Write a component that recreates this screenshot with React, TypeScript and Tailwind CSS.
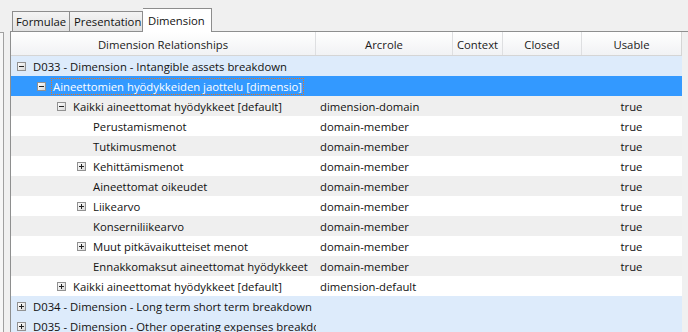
type Row = {
  level: number;
  exp?: "minus" | "plus";
  label: string;
  arcrole?: string;
  usable?: string;
  tone: "blue" | "sel" | "gray" | "white";
};

const rows: Row[] = [
  { level: 0, exp: "minus", label: "D033 - Dimension - Intangible assets breakdown", tone: "blue" },
  { level: 1, exp: "minus", label: "Aineettomien hyödykkeiden jaottelu [dimensio]", tone: "sel" },
  { level: 2, exp: "minus", label: "Kaikki aineettomat hyödykkeet [default]", arcrole: "dimension-domain", usable: "true", tone: "gray" },
  { level: 3, label: "Perustamismenot", arcrole: "domain-member", usable: "true", tone: "white" },
  { level: 3, label: "Tutkimusmenot", arcrole: "domain-member", usable: "true", tone: "gray" },
  { level: 3, exp: "plus", label: "Kehittämismenot", arcrole: "domain-member", usable: "true", tone: "white" },
  { level: 3, label: "Aineettomat oikeudet", arcrole: "domain-member", usable: "true", tone: "gray" },
  { level: 3, exp: "plus", label: "Liikearvo", arcrole: "domain-member", usable: "true", tone: "white" },
  { level: 3, label: "Konserniliikearvo", arcrole: "domain-member", usable: "true", tone: "gray" },
  { level: 3, exp: "plus", label: "Muut pitkävaikutteiset menot", arcrole: "domain-member", usable: "true", tone: "white" },
  { level: 3, label: "Ennakkomaksut aineettomat hyödykkeet", arcrole: "domain-member", usable: "true", tone: "gray" },
  { level: 2, exp: "plus", label: "Kaikki aineettomat hyödykkeet [default]", arcrole: "dimension-default", tone: "white" },
  { level: 0, exp: "plus", label: "D034 - Dimension - Long term short term breakdown", tone: "blue" },
  { level: 0, exp: "plus", label: "D035 - Dimension - Other operating expenses breakdown", tone: "blue" },
];

const toneClass = {
  blue: "bg-[#ddebfb] text-[#111]",
  sel: "bg-[#3399ff] text-white",
  gray: "bg-[#efefef] text-[#111]",
  white: "bg-white text-[#111]",
};

// indent per tree level, in px (box sits 6px in, text 22px in)
const indent = ["pl-[6px]", "pl-[26px]", "pl-[46px]", "pl-[66px]"];

function Expander({ kind }: { kind?: "minus" | "plus" }) {
  if (!kind) return <span className="w-[9px] shrink-0" />;
  return (
    <svg width={9} height={9} viewBox="0 0 9 9" className="shrink-0">
      <defs>
        <linearGradient id="exg" x1="0" y1="0" x2="1" y2="1">
          <stop offset="0" stopColor="#ffffff" />
          <stop offset="1" stopColor="#d6d6d6" />
        </linearGradient>
      </defs>
      <rect x={0.5} y={0.5} width={8} height={8} fill="url(#exg)" stroke="#919191" />
      <rect x={2} y={4} width={5} height={1} fill="#222" />
      {kind === "plus" && <rect x={4} y={2} width={1} height={5} fill="#222" />}
    </svg>
  );
}

const cols = "grid grid-cols-[305px_137px_50px_79px_99px]";

export default function App() {
  return (
    <div className="h-[332px] w-[688px] overflow-hidden bg-[#f0f0f0] font-['Open_Sans','Noto_Sans',sans-serif] text-[11.3px] leading-none">
      {/* tabs */}
      <div className="flex h-[31px] items-end pl-[12px]">
        <div className="flex h-[20px] w-[58px] items-center border border-b-0 border-[#8d8d8d] bg-gradient-to-b from-[#f4f4f4] to-[#e2e2e2] pl-[3px] pt-px text-[#111]">
          Formulae
        </div>
        <div className="flex h-[20px] w-[73px] items-center border border-b-0 border-l-0 border-[#8d8d8d] bg-gradient-to-b from-[#f4f4f4] to-[#e2e2e2] pl-[4px] pt-px text-[#111]">
          Presentation
        </div>
        <div className="relative z-10 -mb-px flex h-[24px] w-[69px] items-start border border-b-0 border-l-0 border-[#8d8d8d] bg-white pl-[5px] pt-[6px] text-[#111]">
          Dimension
        </div>
      </div>

      <div className="flex">
        {/* left splitter edge */}
        <div className="mt-px h-[300px] w-[4px] border-t border-r border-[#a0a0a0] bg-[#f6f6f6]" />
        <div className="ml-[6px] flex-1 border-t border-l border-[#8e8f8f]">
          <div className="w-[671px]">
            {/* header */}
            <div className={`${cols} h-[24px] border-r border-b border-[#d5d5d5] bg-gradient-to-b from-white to-[#f1f2f4] text-[#1a1a1a]`}>
              {["Dimension Relationships", "Arcrole", "Context", "Closed", "Usable"].map((h, i) => (
                <div
                  key={h}
                  className={`flex items-center justify-center pt-[2px] ${i < 4 ? "border-r border-[#dedfe1]" : ""}`}
                >
                  {h}
                </div>
              ))}
            </div>

            {/* rows */}
            {rows.map((r, i) => (
              <div key={i} className={`${cols} h-[20px] ${toneClass[r.tone]}`}>
                <div className={`flex items-center gap-[7px] overflow-hidden whitespace-nowrap pt-px ${indent[r.level]}`}>
                  <Expander kind={r.exp} />
                  {r.tone === "sel" ? (
                    <span className="-ml-[2px] border border-dotted border-[#e8761f] px-px py-[2px]">
                      {r.label}
                    </span>
                  ) : (
                    <span>{r.label}</span>
                  )}
                </div>
                <div className="flex items-center pl-[4px] pt-[2px]">{r.arcrole}</div>
                <div />
                <div />
                <div className="flex items-center justify-center pt-[2px]">{r.usable}</div>
              </div>
            ))}
          </div>
        </div>
      </div>
    </div>
  );
}
